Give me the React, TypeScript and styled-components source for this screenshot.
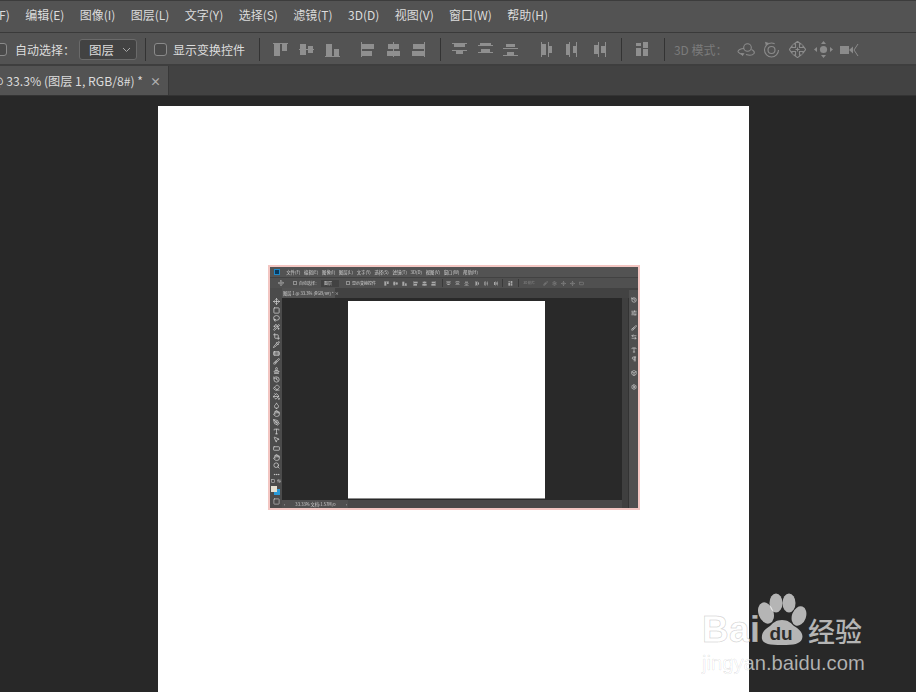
import React from 'react';
import styled, { createGlobalStyle } from 'styled-components';
import {
  Move, Square, Lasso, Wand2, Crop, Pipette, Bandage, Brush, Stamp, History, Eraser,
  PaintBucket, Droplet, Hand as Smudge, PenTool, Type, MousePointer2, RectangleHorizontal,
  Hand, Search, MoreHorizontal, SlidersHorizontal, ArrowLeftRight, Pilcrow, Box, Settings,
} from 'lucide-react';

const GlobalStyle = createGlobalStyle`
  html, body { margin: 0; padding: 0; background: #282828; }
  * { box-sizing: border-box; }
`;

const uiFont = `"Noto Sans CJK SC", "Noto Sans", sans-serif`;

const Page = styled.div`
  position: relative;
  width: 916px;
  height: 692px;
  overflow: hidden;
  display: flex;
  flex-direction: column;
  font-family: ${uiFont};
  background: #282828;
`;

const MenuBar = styled.div`
  height: 33px;
  flex: none;
  display: flex;
  align-items: center;
  gap: 15.4px;
  padding-bottom: 4px;
  background: #535353;
  border-top: 1px solid #3c3c3c;
  border-bottom: 1px solid #3a3a3a;
  color: #dcdcdc;
  font-size: 12px;
  white-space: nowrap;
`;

const MenuItem = styled.span<{ $clip?: boolean }>`
  margin-left: ${({ $clip }) => ($clip ? '-29px' : '0')};
`;

const OptionsBar = styled.div`
  height: 33px;
  flex: none;
  display: flex;
  align-items: center;
  padding-top: 2px;
  background: #535353;
  border-bottom: 2px solid #3e3e3e;
  color: #dcdcdc;
  font-size: 12px;
  white-space: nowrap;
`;

const CheckBox = styled.span<{ $lead?: boolean }>`
  flex: none;
  width: 13px;
  height: 13px;
  border: 1px solid #8a8a8a;
  border-radius: 3px;
  background: #4a4a4a;
  margin-left: ${({ $lead }) => ($lead ? '-6px' : '8px')};
`;

const CheckLabel = styled.span<{ $left: number }>`
  margin-left: ${({ $left }) => $left}px;
`;

const LayerSelect = styled.div`
  width: 58px;
  height: 21px;
  margin-left: 4px;
  display: flex;
  align-items: center;
  justify-content: space-between;
  padding: 0 5px 0 9px;
  background: #424242;
  border: 1px solid #6a6a6a;
  border-radius: 3px;
  font-size: 12.5px;
`;

const Separator = styled.span<{ $left: number }>`
  flex: none;
  width: 1px;
  height: 23px;
  background: #333;
  margin-left: ${({ $left }) => $left}px;
`;

const IconGroup = styled.div<{ $left: number }>`
  display: flex;
  margin-left: ${({ $left }) => $left}px;
`;

const AlignSlot = styled.span`
  width: 25.6px;
  height: 20px;
  display: flex;
  align-items: center;
  justify-content: center;
  color: #8f8f8f;
`;

const ModeLabel = styled.span`
  margin-left: 9px;
  color: #7b7b7b;
  font-size: 12px;
`;

const ModeIcons = styled.div`
  display: flex;
  align-items: center;
  margin-left: 5px;
  color: #8b8b8b;
`;

const ModeSlot = styled.span`
  width: 26px;
  display: flex;
  justify-content: center;
`;

const TabBar = styled.div`
  height: 30px;
  flex: none;
  display: flex;
  background: #424242;
  border-bottom: 1px solid #333;
`;

const DocTab = styled.div`
  width: 169px;
  display: flex;
  align-items: center;
  background: #535353;
  border-right: 1px solid #383838;
  color: #dcdcdc;
  font-size: 12.2px;
  white-space: nowrap;
  overflow: hidden;
`;

const TabTitle = styled.span`
  margin-left: -8px;
`;

const TabClose = styled.span`
  margin-left: 7px;
  color: #b0b0b0;
  font-size: 11px;
  font-weight: 700;
`;

const Canvas = styled.div`
  flex: 1;
  min-height: 0;
  padding: 10px 0 0 158px;
  background: #282828;
`;

const Sheet = styled.div`
  width: 591px;
  height: 700px;
  padding: 159px 0 0 110px;
  background: #fff;
`;

/* the pasted, scaled down screenshot of the same program */
const MiniWindow = styled.div`
  width: 372px;
  height: 245px;
  display: flex;
  flex-direction: column;
  border: 2px solid #f3c6c2;
  background: #282828;
  color: #cfcfcf;
  overflow: hidden;
`;

const MiniBlur = styled.div`
  flex: 1;
  min-height: 0;
  display: flex;
  flex-direction: column;
  filter: blur(0.4px);
`;

const MiniMenu = styled.div`
  height: 10px;
  flex: none;
  display: flex;
  align-items: center;
  gap: 3.7px;
  padding-left: 4px;
  background: #535353;
  font-size: 4.4px;
  white-space: nowrap;
`;

const MiniLogo = styled.span`
  width: 6px;
  height: 6px;
  margin-right: 2.500px;
  background: #0b3a5c;
  border: 1px solid #1d88c9;
`;

const MiniOptions = styled.div`
  height: 11px;
  flex: none;
  display: flex;
  align-items: center;
  padding-left: 8px;
  background: #505050;
  border-top: 1px solid #424242;
  font-size: 4px;
  white-space: nowrap;
`;

const MiniCheck = styled.span<{ $left: number }>`
  flex: none;
  width: 4px;
  height: 4px;
  margin-left: ${({ $left }) => $left}px;
  border: 1px solid #8f8f8f;
`;

const MiniLabel = styled.span`
  margin-left: 2px;
`;

const MiniSelect = styled.span`
  flex: none;
  width: 18px;
  height: 7px;
  margin-left: 2px;
  padding-left: 3px;
  line-height: 7px;
  background: #424242;
`;

const MiniSlots = styled.span<{ $left: number; $dim?: boolean }>`
  display: flex;
  flex: none;
  margin-left: ${({ $left }) => $left}px;
  color: ${({ $dim }) => ($dim ? '#808080' : '#a8a8a8')};
`;

const MiniSlot = styled.span`
  width: 9px;
  display: flex;
  justify-content: center;
`;

const MiniBar = styled.span<{ $left: number }>`
  flex: none;
  width: 1px;
  height: 8px;
  margin-left: ${({ $left }) => $left}px;
  background: #3a3a3a;
`;

const MiniMode = styled.span`
  flex: none;
  width: 11px;
  margin-left: 5px;
  font-size: 3px;
  color: #8a8a8a;
`;

const MiniTabs = styled.div`
  height: 10px;
  flex: none;
  display: flex;
  background: #424242;
`;

const MiniTab = styled.div`
  width: 53px;
  margin-left: 12px;
  padding-left: 1px;
  line-height: 10px;
  background: #535353;
  font-size: 4.200px;
  white-space: nowrap;
`;

const MiniBody = styled.div`
  flex: 1;
  min-height: 0;
  display: flex;
`;

const MiniTools = styled.div`
  width: 12px;
  flex: none;
  margin-top: -10px;
  padding-top: 10px;
  display: flex;
  flex-direction: column;
  align-items: center;
  gap: 1.650px;
  background: #4b4b4b;
  color: #d8d8d8;
`;

const MiniSwap = styled.div`
  display: flex;
  gap: 2px;
  height: 4px;
`;

const MiniSwatches = styled.div`
  position: relative;
  width: 10px;
  height: 10px;
  margin: 0.5px 0 1px;
`;

const Swatch = styled.span<{ $color: string; $back?: boolean }>`
  position: absolute;
  left: ${({ $back }) => ($back ? 3 : 0)}px;
  top: ${({ $back }) => ($back ? 3 : 0)}px;
  width: 6px;
  height: 6px;
  background: ${({ $color }) => $color};
`;

const MiniMain = styled.div`
  flex: 1;
  min-width: 0;
  display: flex;
  flex-direction: column;
`;

const MiniCanvas = styled.div`
  flex: 1;
  min-height: 0;
  padding: 3px 0 0 66px;
  background: #292929;
`;

const MiniSheet = styled.div`
  width: 197px;
  height: 197px;
  background: #fff;
  box-shadow: 0 1px 0 #8c8c8c;
`;

const MiniStatus = styled.div`
  height: 8px;
  flex: none;
  display: flex;
  background: #484848;
  font-size: 4.200px;
  line-height: 8px;
  white-space: nowrap;
`;

const MiniStatusInfo = styled.div`
  width: 66px;
  display: flex;
  justify-content: space-between;
  padding: 0 1px 0 2px;
  background: #4f4f4f;
`;

const MiniDockGutter = styled.div`
  width: 7px;
  flex: none;
  background: #3f3f3f;
  border-right: 1px solid #333;
`;

const MiniDock = styled.div`
  width: 9px;
  flex: none;
  margin-top: -8px;
  display: flex;
  flex-direction: column;
  align-items: center;
  background: #4f4f4f;
  color: #d0d0d0;
`;

const MiniDockCell = styled.span<{ $gap: number }>`
  display: flex;
  margin-top: ${({ $gap }) => $gap}px;
`;

const Watermark = styled.div`
  position: absolute;
  left: 702px;
  top: 592px;
  display: flex;
  flex-direction: column;
  color: rgba(255, 255, 255, 0.66);
  pointer-events: none;
`;

const BrandRow = styled.div`
  display: flex;
  align-items: flex-end;
  height: 56px;
  -webkit-text-stroke: 1px rgba(0, 0, 0, 0.15);
`;

const BrandWord = styled.span`
  font-family: "Liberation Sans", sans-serif;
  font-weight: 700;
  font-size: 37px;
  line-height: 42px;
  letter-spacing: 0.2px;
  width: 56px;
  margin-bottom: -3px;
`;

const PawBox = styled.div`
  position: relative;
  width: 50px;
  height: 56px;
  flex: none;
`;

const PawText = styled.span`
  position: absolute;
  left: 5px;
  top: 32px;
  width: 36px;
  text-align: center;
  font-family: "Liberation Sans", sans-serif;
  font-weight: 700;
  font-size: 19px;
  line-height: 20px;
  color: #2c2c2c;
  -webkit-text-stroke: 0;
`;

const BrandCn = styled.span`
  font-size: 27px;
  line-height: 34px;
  font-weight: 500;
  white-space: nowrap;
  -webkit-text-stroke: 0;
`;

const BrandUrl = styled.div`
  margin-top: 3px;
  font-family: "Liberation Sans", sans-serif;
  font-size: 20.200px;
  line-height: 24px;
  white-space: nowrap;
  -webkit-text-stroke: 0.6px rgba(0, 0, 0, 0.12);
`;

type Bar = [number, number, number, number];

const alignIcons: Bar[][] = [
  [[0, 1, 15, 1], [1, 2, 6, 12], [9, 2, 5, 7]],
  [[0, 7, 15, 1], [1, 2, 6, 11], [9, 4, 5, 7]],
  [[0, 14, 15, 1], [1, 2, 6, 12], [9, 7, 5, 7]],
  [[1, 0, 1, 15], [2, 2, 12, 5], [2, 9, 10, 5]],
  [[7, 0, 1, 15], [2, 2, 11, 5], [1, 9, 13, 5]],
  [[13, 0, 1, 15], [2, 2, 11, 5], [1, 9, 12, 5]],
  [[0, 1, 15, 1], [2, 2, 11, 3], [0, 8, 15, 1], [4, 9, 7, 3]],
  [[0, 3, 15, 1], [2, 1, 11, 2], [0, 10, 15, 1], [3, 7, 9, 3]],
  [[0, 13, 15, 1], [4, 10, 7, 3], [0, 6, 15, 1], [3, 2, 9, 3]],
  [[1, 0, 1, 15], [2, 2, 4, 11], [8, 0, 1, 15], [9, 4, 3, 7]],
  [[4, 0, 1, 15], [1, 2, 3, 11], [11, 0, 1, 15], [8, 4, 3, 7]],
  [[7, 0, 1, 15], [3, 3, 4, 9], [14, 0, 1, 15], [10, 4, 4, 7]],
];
const distributeBars: Bar[] = [[1, 1, 5, 3], [1, 6, 5, 8], [8, 0, 5, 6], [8, 7, 5, 7]];

const AlignIcon = ({ bars, size = 15 }: { bars: Bar[]; size?: number }) => (
  <svg width={size} height={size} viewBox="0 0 15 15" fill="currentColor">
    {bars.map(([x, y, w, h], i) => (
      <rect key={i} x={x} y={y} width={w} height={h} />
    ))}
  </svg>
);

const OrbitIcon = () => (
  <svg width="18" height="16" viewBox="0 0 18 16" fill="none" stroke="currentColor" strokeWidth="1.1">
    <circle cx="10.5" cy="5.5" r="3.8" />
    <path d="M7 6.5C3.5 6.5 1 8 1 9.5c0 1 2 2 4 3M9 12.5c3 1 6.5.8 8-1 .8-1.4-.2-3-2.5-4" />
    <path d="M3.5 11l4 .2-2 3z" fill="currentColor" stroke="none" />
  </svg>
);

const RollIcon = () => (
  <svg width="17" height="17" viewBox="0 0 17 17" fill="none" stroke="currentColor" strokeWidth="1.1">
    <circle cx="8.5" cy="9" r="7" strokeDasharray="36 8" />
    <circle cx="8.5" cy="9" r="3.5" />
    <path d="M2 .8l3.8 1.2-3 2.6z" fill="currentColor" stroke="none" />
  </svg>
);

const PanIcon = () => (
  <svg width="17" height="17" viewBox="0 0 17 17" fill="none" stroke="currentColor" strokeWidth="1.1">
    <path d="M6.5 6.5V3H5l3.5-2.6L12 3h-1.5v3.5H14V5l2.6 3.5L14 12v-1.5h-3.5V14H12l-3.500 2.600L5 14h1.500v-3.500H3V12L.4 8.500 3 5v1.500z" />
    <path d="M6.5 8.500h4M8.500 6.500v4" />
  </svg>
);

const SlideIcon = () => (
  <svg width="19" height="17" viewBox="0 0 19 17" fill="currentColor">
    <circle cx="9.500" cy="8.500" r="3.600" />
    <path d="M9.500 0l2.500 3H7zM9.500 17l2.500-3H7zM0 8.500l3-2.500v5zM19 8.500l-3-2.500v5z" />
  </svg>
);

const CameraIcon = () => (
  <svg width="19" height="14" viewBox="0 0 19 14" fill="none" stroke="currentColor" strokeWidth="1">
    <rect x="0" y="3" width="9" height="8" fill="currentColor" stroke="none" />
    <path d="M9 7l4-3.500v7z" fill="currentColor" stroke="none" />
    <path d="M18 1l-4 6 4 6" />
  </svg>
);

const Chevron = () => (
  <svg width="9" height="6" viewBox="0 0 9 6" fill="none" stroke="#a8a8a8" strokeWidth="1">
    <path d="M1 1l3.500 3.500L8 1" />
  </svg>
);

const menuItems = ['编辑(E)', '图像(I)', '图层(L)', '文字(Y)', '选择(S)', '滤镜(T)', '3D(D)', '视图(V)', '窗口(W)', '帮助(H)'];
const miniMenuItems = ['文件(F)', ...menuItems];
const toolIcons = [
  Move, Square, Lasso, Wand2, Crop, Pipette, Bandage, Brush, Stamp, History, Eraser,
  PaintBucket, Droplet, Smudge, PenTool, Type, MousePointer2, RectangleHorizontal, Hand, Search, MoreHorizontal,
];
const dockCells = [
  { Icon: History, gap: 7 },
  { Icon: SlidersHorizontal, gap: 7 },
  { Icon: Brush, gap: 9 },
  { Icon: ArrowLeftRight, gap: 3 },
  { Icon: Type, gap: 7 },
  { Icon: Pilcrow, gap: 3 },
  { Icon: Box, gap: 8 },
  { Icon: Settings, gap: 8 },
];

const alignGroup = (from: number, to: number) =>
  alignIcons.slice(from, to).map((b, i) => (
    <AlignSlot key={i}>
      <AlignIcon bars={b} />
    </AlignSlot>
  ));

const miniGroup = (from: number, to: number) =>
  alignIcons.slice(from, to).map((b, i) => (
    <MiniSlot key={i}>
      <AlignIcon bars={b} size={5} />
    </MiniSlot>
  ));

const App: React.FC = () => (
  <Page>
    <GlobalStyle />
    <MenuBar>
      <MenuItem $clip>文件(F)</MenuItem>
      {menuItems.map((m) => (
        <MenuItem key={m}>{m}</MenuItem>
      ))}
    </MenuBar>

    <OptionsBar>
      <CheckBox $lead />
      <CheckLabel $left={8}>自动选择：</CheckLabel>
      <LayerSelect>
        图层
        <Chevron />
      </LayerSelect>
      <Separator $left={8} />
      <CheckBox />
      <CheckLabel $left={6}>显示变换控件</CheckLabel>
      <Separator $left={14} />
      <IconGroup $left={8}>{alignGroup(0, 3)}</IconGroup>
      <IconGroup $left={10.2}>{alignGroup(3, 6)}</IconGroup>
      <Separator $left={8} />
      <IconGroup $left={6}>{alignGroup(6, 9)}</IconGroup>
      <IconGroup $left={11}>{alignGroup(9, 12)}</IconGroup>
      <Separator $left={10} />
      <IconGroup $left={7}>
        <AlignSlot>
          <AlignIcon bars={distributeBars} />
        </AlignSlot>
      </IconGroup>
      <Separator $left={9} />
      <ModeLabel>3D 模式：</ModeLabel>
      <ModeIcons>
        <ModeSlot><OrbitIcon /></ModeSlot>
        <ModeSlot><RollIcon /></ModeSlot>
        <ModeSlot><PanIcon /></ModeSlot>
        <ModeSlot><SlideIcon /></ModeSlot>
        <ModeSlot><CameraIcon /></ModeSlot>
      </ModeIcons>
    </OptionsBar>

    <TabBar>
      <DocTab>
        <TabTitle>@ 33.3% (图层 1, RGB/8#) *</TabTitle>
        <TabClose>×</TabClose>
      </DocTab>
    </TabBar>

    <Canvas>
      <Sheet>
        <MiniWindow>
          <MiniBlur>
            <MiniMenu>
              <MiniLogo />
              {miniMenuItems.map((m) => (
                <span key={m}>{m}</span>
              ))}
            </MiniMenu>
            <MiniOptions>
              <Move size={6} />
              <MiniCheck $left={9} />
              <MiniLabel>自动选择：</MiniLabel>
              <MiniSelect>图层</MiniSelect>
              <MiniCheck $left={7} />
              <MiniLabel>显示变换控件</MiniLabel>
              <MiniSlots $left={6}>{miniGroup(0, 3)}</MiniSlots>
              <MiniSlots $left={2}>{miniGroup(3, 6)}</MiniSlots>
              <MiniBar $left={3.5} />
              <MiniSlots $left={1}>{miniGroup(6, 9)}</MiniSlots>
              <MiniSlots $left={2}>{miniGroup(9, 12)}</MiniSlots>
              <MiniBar $left={2.5} />
              <MiniSlots $left={3}>
                <MiniSlot><AlignIcon bars={distributeBars} size={5} /></MiniSlot>
              </MiniSlots>
              <MiniBar $left={2.5} />
              <MiniMode>3D 模式：</MiniMode>
              <MiniSlots $left={6.5} $dim>
                {[Brush, Settings, Move, Move, RectangleHorizontal].map((Icon, i) => (
                  <MiniSlot key={i}><Icon size={5} strokeWidth={3} /></MiniSlot>
                ))}
              </MiniSlots>
            </MiniOptions>
            <MiniTabs>
              <MiniTab>图层 1 @ 33.3% (RGB/8#) * ×</MiniTab>
            </MiniTabs>
            <MiniBody>
              <MiniTools>
                {toolIcons.map((Icon, i) => (
                  <Icon key={i} size={7} strokeWidth={2.4} />
                ))}
                <MiniSwap>
                  <Square size={4} strokeWidth={3} />
                  <ArrowLeftRight size={4} strokeWidth={3} />
                </MiniSwap>
                <MiniSwatches>
                  <Swatch $color="#2a9bd8" $back />
                  <Swatch $color="#e4dfd0" />
                </MiniSwatches>
                <Square size={7} strokeWidth={2} />
              </MiniTools>
              <MiniMain>
                <MiniCanvas>
                  <MiniSheet />
                </MiniCanvas>
                <MiniStatus>
                  <MiniStatusInfo>
                    <span>‹</span>
                    <span>33.33% 文档:1.57M/0</span>
                    <span>›</span>
                  </MiniStatusInfo>
                </MiniStatus>
              </MiniMain>
              <MiniDockGutter />
              <MiniDock>
                {dockCells.map(({ Icon, gap }, i) => (
                  <MiniDockCell key={i} $gap={gap}>
                    <Icon size={6} strokeWidth={2.6} />
                  </MiniDockCell>
                ))}
              </MiniDock>
            </MiniBody>
          </MiniBlur>
        </MiniWindow>
      </Sheet>
    </Canvas>

    <Watermark>
      <BrandRow>
        <BrandWord>Bai</BrandWord>
        <PawBox>
          <svg width="50" height="56" viewBox="0 0 50 56" fill="rgba(255,255,255,0.66)">
            <ellipse cx="8" cy="21" rx="7.500" ry="11" transform="rotate(-20 8 21)" />
            <ellipse cx="18" cy="11" rx="6.500" ry="9.500" />
            <ellipse cx="31" cy="11" rx="6.500" ry="9.500" />
            <ellipse cx="41" cy="24" rx="7" ry="10" transform="rotate(20 41 24)" />
            <path d="M24 28c6 0 9 3 12 6 5 3 10 7 8 13-2 5-8 6-20 6s-19-1-20-6c-1-6 3-10 8-13 3-3 6-6 12-6z" />
          </svg>
          <PawText>du</PawText>
        </PawBox>
        <BrandCn>经验</BrandCn>
      </BrandRow>
      <BrandUrl>jingyan.baidu.com</BrandUrl>
    </Watermark>
  </Page>
);

export default App;
